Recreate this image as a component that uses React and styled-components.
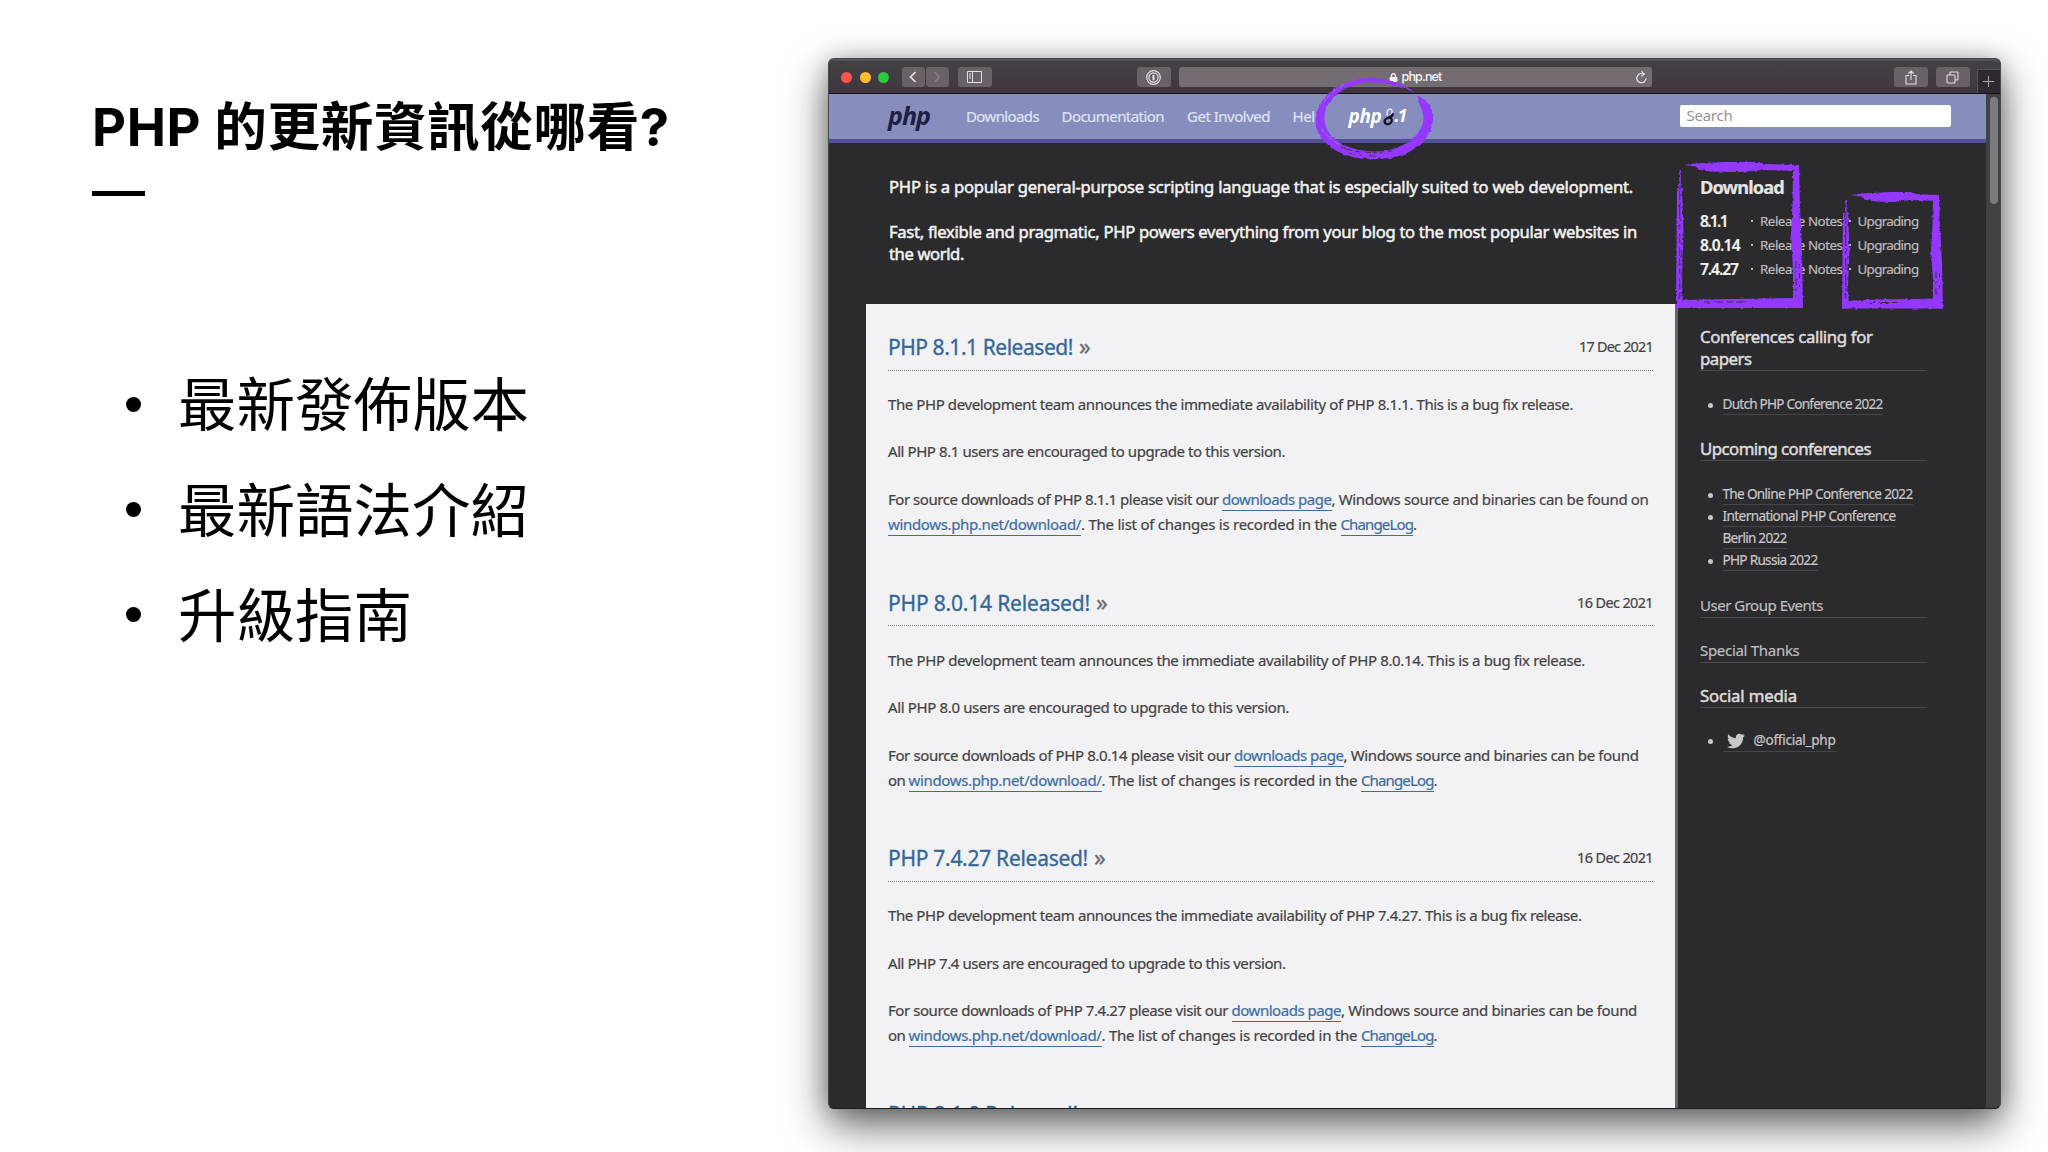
import React, { useLayoutEffect, useRef, useState } from 'react';
import styled, { createGlobalStyle } from 'styled-components';
import { FaLock, FaTwitter } from 'react-icons/fa';

const GlobalStyle = createGlobalStyle`
  * {
    box-sizing: border-box;
  }

  html, body {
    margin: 0;
    padding: 0;
    background: #fff;
    overflow: hidden;
  }

  h1, h2, h3, p, ul {
    margin: 0;
    padding: 0;
    font-weight: normal;
  }

  ul {
    list-style: none;
  }
`;

const sans = `"Noto Sans", "Open Sans", sans-serif`;
const purple = '#9437ff';

/* ---------- text that is tracked to a given width ---------- */

const FitBox = styled.span`
  display: inline-block;
  white-space: pre;
  width: ${(props) => props.$w}px;
`;

function Fit({ w, children }) {
  const ref = useRef(null);
  const [spacing, setSpacing] = useState(0);

  useLayoutEffect(() => {
    const el = ref.current;
    const natural = el.getBoundingClientRect().width;
    setSpacing((w - natural) / el.textContent.length);
  }, [w]);

  return (
    <FitBox $w={w}>
      <span ref={ref} style={{ letterSpacing: spacing }}>{children}</span>
    </FitBox>
  );
}

/* ---------- slide ---------- */

const Slide = styled.main`
  width: 2048px;
  height: 1152px;
  display: flex;
  background: #fff;
  overflow: hidden;
  position: relative;
`;

const Left = styled.section`
  width: 828px;
  flex: none;
  padding: 88px 0 0 92px;
`;

const Title = styled.h1`
  font-family: Inter, "Noto Sans CJK TC", sans-serif;
  font-size: 52.6px;
  line-height: 78px;
  font-weight: 700;
  letter-spacing: 0.6px;
  color: #000;
  white-space: nowrap;
`;

const Dash = styled.div`
  width: 53px;
  height: 5px;
  margin-top: 25px;
  background: #000;
`;

const Bullets = styled.ul`
  margin-top: 155.5px;
  padding-left: 34px;
`;

const Bullet = styled.li`
  display: flex;
  align-items: center;
  height: 105.4px;
  font-family: "Noto Sans CJK TC", sans-serif;
  font-size: 58.5px;
  line-height: 80px;
  color: #000;

  &::before {
    content: "";
    width: 15px;
    height: 15px;
    margin-right: 37px;
    border-radius: 50%;
    background: #000;
  }

  > span {
    padding-bottom: 6px;
  }
`;

/* ---------- browser window ---------- */

const Window = styled.section`
  width: 1173px;
  height: 1051px;
  flex: none;
  margin-top: 58px;
  border: 1px solid #48484b;
  border-bottom-color: #1d1c1f;
  border-radius: 6px;
  background: #2b2a2c;
  box-shadow: 0 16px 42px 0 rgba(0, 0, 0, 0.62), 0 0 22px rgba(0, 0, 0, 0.18);
  display: flex;
  flex-direction: column;
  overflow: hidden;
  font-family: ${sans};
`;

const TitleBar = styled.div`
  height: 35px;
  flex: none;
  display: flex;
  align-items: center;
  padding: 1px 0 1px 12px;
  border-top: 2px solid #555457;
  border-bottom: 1px solid #151317;
  background: linear-gradient(#434145, #40353f);
`;

const Light = styled.span`
  width: 11px;
  height: 11px;
  margin-right: 7.5px;
  border-radius: 50%;
  background: ${(props) => props.$color};
`;

const BarButton = styled.span`
  width: ${(props) => props.$w || 34}px;
  height: 20px;
  margin-left: ${(props) => props.$ml || 0}px;
  border-radius: 3px;
  background: #696168;
  color: ${(props) => (props.$dim ? '#8d858c' : '#e4e0e4')};
  display: flex;
  align-items: center;
  justify-content: center;
`;

const Address = styled.div`
  width: 473px;
  height: 20px;
  margin-left: 8px;
  padding: 0 5px 0 210px;
  border-radius: 3px;
  background: #746c73;
  color: #f6f4f6;
  display: flex;
  align-items: center;
  font: 500 12.5px/20px Inter, sans-serif;

  > :last-child {
    margin-left: auto;
  }
`;

const Url = styled.span`
  margin-left: 4px;
`;

const NewTab = styled.span`
  width: 23px;
  height: 24px;
  margin-left: 7px;
  margin-bottom: -1px;
  align-self: flex-end;
  border: 1px solid #59535a;
  border-width: 1px 0 0 1px;
  background: #2e2930;
  color: #aaa6ab;
  display: flex;
  align-items: center;
  justify-content: center;
`;

const View = styled.div`
  flex: 1;
  min-height: 0;
  display: flex;
`;

const Page = styled.div`
  width: 1157px;
  flex: none;
  display: flex;
  flex-direction: column;
  overflow: hidden;
`;

const ScrollTrack = styled.div`
  flex: 1;
  padding: 3px 0 0 4px;
  background: #414043;
`;

const ScrollThumb = styled.div`
  width: 8px;
  height: 107px;
  border-radius: 4px;
  background: #7a797b;
`;

/* ---------- php.net header ---------- */

const Nav = styled.nav`
  height: 49px;
  flex: none;
  display: flex;
  align-items: center;
  padding: 0 0 1px 59px;
  border-bottom: 4px solid #4f5096;
  background: #878dbd;
`;

const NavLink = styled.span`
  margin-left: ${(props) => props.$ml}px;
  margin-top: -1px;
  font-size: 15px;
  line-height: 24px;
  color: #dfe3f6;
  -webkit-text-stroke: 0.2px;
`;

const Logo = styled.span`
  width: ${(props) => props.$w}px;
  font-size: ${(props) => props.$size}px;
  line-height: 30px;
  margin-top: -${(props) => props.$up}px;
  font-weight: 700;
  font-style: italic;
  color: ${(props) => props.$color};
`;

const Release = styled.span`
  display: flex;
  align-items: center;
  margin-left: 25px;
`;

const Search = styled.span`
  width: 271px;
  height: 22px;
  margin-left: 274px;
  padding-left: 7px;
  border-radius: 2px;
  background: #fff;
  color: #949494;
  font-size: 15px;
  line-height: 21px;
`;

/* ---------- php.net body ---------- */

const Body = styled.div`
  flex: 1;
  min-height: 0;
  display: flex;
`;

const Main = styled.div`
  width: 846px;
  flex: none;
  display: flex;
  flex-direction: column;
`;

const Intro = styled.div`
  height: 160.5px;
  flex: none;
  padding: 33px 0 0 60px;
  font-size: 16.6px;
  line-height: 22px;
  color: #f3f3f3;
  -webkit-text-stroke: 0.5px;

  p + p {
    margin-top: 23px;
  }
`;

const Line = styled.span`
  display: block;
  white-space: nowrap;
`;

const News = styled.div`
  flex: 1;
  min-height: 0;
  margin-left: 37px;
  padding: 0 22px;
  background: #f2f1f3;
  overflow: hidden;
`;

const Article = styled.article`
  height: 255.7px;
  padding-top: 27px;
  font-size: 15px;
  line-height: 25px;
  color: #434244;
  -webkit-text-stroke: 0.2px;
`;

const ArticleHead = styled.header`
  height: 40px;
  display: flex;
  align-items: center;
  justify-content: space-between;
  padding-bottom: 7px;
  border-bottom: 1px dotted #857f84;
  font-size: 14.4px;
`;

const ArticleTitle = styled.h2`
  font-size: 21px;
  line-height: 30px;
  color: #33669a;
  white-space: nowrap;
  -webkit-text-stroke: 0.3px;

  i {
    margin-left: 6px;
    font-size: 23px;
    font-style: normal;
    color: #6b6b70;
  }
`;

const Para = styled.p`
  margin-top: ${(props) => props.$mt}px;
`;

const Link = styled.a`
  color: #3a6ea5;

  ${FitBox} {
    line-height: 21px;
    border-bottom: 1px solid #3a6ea5;
  }
`;

/* ---------- php.net sidebar ---------- */

const Aside = styled.aside`
  flex: 1;
  padding-top: 32px;
  padding-left: 22px;
  color: #c8c7c9;
  -webkit-text-stroke: 0.2px;
`;

const Divider = styled.div`
  width: 3px;
  flex: none;
  margin-top: 161px;
  background: #646468;
`;

const DownloadTitle = styled.h3`
  font-size: 18.2px;
  line-height: 24px;
  height: 34px;
  font-weight: 700;
  color: #e4e3e5;
`;

const Row = styled.div`
  display: flex;
  align-items: center;
  height: 24px;
  font-size: 13.4px;
  line-height: 24px;
  color: #bdbcbe;
`;

const Version = styled.b`
  width: 51px;
  font-size: 15.6px;
  font-weight: 600;
  color: #f2f2f2;
`;

const Dot = styled.i`
  width: 2px;
  height: 2px;
  margin: 0 7px 0 ${(props) => props.$ml || 0}px;
  background: #bdbcbe;
`;

const SideTitle = styled.h3`
  width: 227px;
  margin-top: ${(props) => props.$mt}px;
  padding-bottom: ${(props) => props.$pb || 0}px;
  border-bottom: 1px solid #4a494c;
  font-size: ${(props) => (props.$small ? 15 : 16.8)}px;
  line-height: 22px;
  color: ${(props) => (props.$small ? '#bfbec0' : '#dddcde')};
  -webkit-text-stroke: ${(props) => (props.$small ? 0.2 : 0.5)}px;
`;

const SideList = styled.ul`
  margin-top: ${(props) => props.$mt}px;
`;

const SideItem = styled.li`
  display: flex;
  align-items: flex-start;
  padding-left: 8px;
  font-size: 13.6px;
  line-height: 20px;

  &::before {
    content: "";
    width: 5px;
    height: 5px;
    margin: 9px 9.5px 0 0;
    border-radius: 50%;
    background: #c8c7c9;
  }

  ${FitBox} {
    display: block;
    height: 22.2px;
    background: linear-gradient(#454447, #454447) 0 20px / 100% 1px no-repeat;
  }
`;

const Handle = styled.span`
  display: flex;
  height: 22px;
  border-bottom: 1px solid #454447;

  > svg {
    margin: 2px 9px 0 4px;
    flex: none;
  }

  ${FitBox} {
    background: none;
  }
`;

/* ---------- hand-drawn marks over the window ---------- */

const Mark = styled.svg`
  position: absolute;
  left: ${(props) => props.$x}px;
  top: ${(props) => props.$y}px;
  overflow: visible;
`;

function RoughFilter() {
  return (
    <filter id="rough" x="-10%" y="-10%" width="120%" height="120%">
      <feTurbulence type="fractalNoise" baseFrequency="0.22 0.3" numOctaves="2" seed="4" result="n" />
      <feDisplacementMap in="SourceGraphic" in2="n" scale="3" xChannelSelector="R" yChannelSelector="G" />
    </filter>
  );
}

function BrushBox({ x, y, w, h }) {
  return (
    <Mark $x={x} $y={y} width={w} height={h} fill={purple}>
      <g filter="url(#rough)">
        <path d={`M8 3 L20 1.5 L48 0 L${w * 0.66} 0 L${w * 0.7} 2 L${w - 4} 3 L${w - 4} 9 L${w * 0.68} 8 L${w * 0.5} 10 L34 9.5 L22 7.5 L20 4.5 Z`} />
        <path d={`M${w - 10} 4 L${w - 4} 4 L${w - 3} ${h * 0.3} L${w - 1} ${h * 0.6} L${w} ${h} L${w - 10} ${h} L${w - 10} ${h * 0.75} L${w - 12} ${h * 0.5} L${w - 10.5} ${h * 0.3} Z`} />
        <path d={`M0 ${h} L1 ${h - 6} L10 ${h - 8} L${w * 0.4} ${h - 9} L${w - 2} ${h - 10} L${w} ${h} Z`} />
        <path d={`M0 ${h} L1 ${h * 0.18} L6 ${h * 0.18} L7.5 ${h * 0.5} L6 ${h * 0.8} L7 ${h} Z`} />
        <path d={`M3.5 8 L5 8 L4.5 ${h * 0.2} L3 ${h * 0.2} Z`} />
      </g>
      <g fill="none" stroke="#2b2a2c" strokeWidth="0.9" filter="url(#rough)">
        <path d={`M3.8 ${h * 0.18} L3.8 ${h - 9}`} strokeDasharray="11 3 19 2 6 4" />
        <path d={`M6 ${h * 0.55} V${h - 12}`} strokeDasharray="3 5 7 6" />
        <path d={`M${w - 7} ${h * 0.68} V${h - 11}`} strokeDasharray="7 3 3 4" />
        <path d={`M${w - 3.5} ${h * 0.7} V${h - 14}`} strokeDasharray="4 6" />
        <path d={`M28 ${h - 6} H${w * 0.55}`} strokeDasharray="6 3 10 4" />
      </g>
    </Mark>
  );
}

function BrushCircle() {
  return (
    <Mark $x={1315} $y={77} width="119" height="83" fill={purple}>
      <g filter="url(#rough)">
        <path
          fillRule="evenodd"
          d="M100 16 C90 7 74 2 57 1 C40 1 22 7 12 18 C3 27 -1 40 1 50 C4 63 18 74 34 79
             C52 84 74 83 90 77 C106 70 116 58 118 44 C119 32 113 23 103 19 L104 27
             C109 35 110 44 106 51 C99 64 84 72 68 74 C49 76 30 71 20 62 C11 55 8 45 10 35
             C13 23 24 12 40 8 C58 3 80 6 96 14 Z"
        />
      </g>
      <g fill="none" stroke="#878dbd" strokeWidth="1" filter="url(#rough)">
        <path d="M9 25 C13 18 21 11 29 8" strokeDasharray="9 4 5 3" />
        <path d="M6 50 C11 59 18 64 25 68" strokeDasharray="5 3 9 3" />
      </g>
      <g fill="none" stroke="#37333e" strokeWidth="0.9" filter="url(#rough)">
        <path d="M26 70 C42 77 60 76 78 74" strokeDasharray="12 3 5 4" />
        <path d="M34 76 C46 79 54 79 62 79" strokeDasharray="6 4" />
      </g>
    </Mark>
  );
}

/* ---------- data ---------- */

const bullets = ['最新發佈版本', '最新語法介紹', '升級指南'];

const news = [
  { v: '8.1.1', minor: '8.1', date: '17 Dec 2021', titleW: 185, dateW: 74, p1: 685, p2: 397, a: 334, b: 317, wrap: false },
  { v: '8.0.14', minor: '8.0', date: '16 Dec 2021', titleW: 202, dateW: 76, p1: 697, p2: 401, a: 346, b: 295, wrap: true },
  { v: '7.4.27', minor: '7.4', date: '16 Dec 2021', titleW: 200, dateW: 76, p1: 693.5, p2: 397.5, a: 343.5, b: 296, wrap: true },
];

const versions = [
  { v: '8.1.1', w: 27 },
  { v: '8.0.14', w: 40 },
  { v: '7.4.27', w: 38 },
];

function NewsItem({ item }) {
  return (
    <Article>
      <ArticleHead>
        <ArticleTitle>
          <Fit w={item.titleW}>{`PHP ${item.v} Released!`}</Fit>
          <i>»</i>
        </ArticleTitle>
        <Fit w={item.dateW}>{item.date}</Fit>
      </ArticleHead>
      <Para $mt={21.6}>
        <Fit w={item.p1}>{`The PHP development team announces the immediate availability of PHP ${item.v}. This is a bug fix release.`}</Fit>
      </Para>
      <Para $mt={22.2}>
        <Fit w={item.p2}>{`All PHP ${item.minor} users are encouraged to upgrade to this version.`}</Fit>
      </Para>
      <Para $mt={22.6}>
        <Line>
          <Fit w={item.a}>{`For source downloads of PHP ${item.v} please visit our `}</Fit>
          <Link><Fit w={109.5}>downloads page</Fit></Link>
          <Fit w={item.b}>{`, Windows source and binaries can be found${item.wrap ? '' : ' on'}`}</Fit>
        </Line>
        <Line>
          {item.wrap && <Fit w={20.5}>{'on '}</Fit>}
          <Link><Fit w={193}>windows.php.net/download/</Fit></Link>
          <Fit w={259.5}>{'. The list of changes is recorded in the '}</Fit>
          <Link><Fit w={72.5}>ChangeLog</Fit></Link>.
        </Line>
      </Para>
    </Article>
  );
}

function Toolbar() {
  return (
    <TitleBar>
      <Light $color="#fc5650" />
      <Light $color="#fdbd2e" />
      <Light $color="#2bc840" />
      <BarButton $w={23} $ml={5}>
        <svg width="8" height="12" viewBox="0 0 8 12" fill="none" stroke="currentColor" strokeWidth="1.7">
          <path d="M6.5 1 L1.5 6 L6.5 11" />
        </svg>
      </BarButton>
      <BarButton $w={23} $ml={1} $dim>
        <svg width="8" height="12" viewBox="0 0 8 12" fill="none" stroke="currentColor" strokeWidth="1.3">
          <path d="M1.5 1 L6.5 6 L1.5 11" />
        </svg>
      </BarButton>
      <BarButton $ml={9}>
        <svg width="15" height="12" viewBox="0 0 15 12" fill="none" stroke="currentColor">
          <path d="M.5 .5 H14.5 V11.5 H.5 Z M5.5 .5 V11.5 M2 3 H4 M2 5 H4 M2 7 H4" />
        </svg>
      </BarButton>
      <BarButton $ml={145}>
        <svg width="15" height="15" viewBox="0 0 15 15" fill="none" stroke="currentColor">
          <circle cx="7.5" cy="7.5" r="6.8" strokeWidth="1.2" />
          <circle cx="7.5" cy="7.5" r="4.6" strokeWidth="1.2" />
          <path d="M7.5 4.8 V10.2" strokeWidth="2" />
        </svg>
      </BarButton>
      <Address>
        <FaLock size={9} />
        <Url><Fit w={40}>php.net</Fit></Url>
        <svg width="11" height="13" viewBox="0 0 11 13" fill="none" stroke="currentColor" strokeWidth="1.1">
          <path d="M6.8 2.8 A4.6 4.6 0 1 0 10 7.2" />
          <path d="M5.4 .4 L8.2 3 L5.4 5.4" />
        </svg>
      </Address>
      <BarButton $ml={242}>
        <svg width="12" height="15" viewBox="0 0 12 15" fill="none" stroke="currentColor" strokeWidth="1.1">
          <path d="M4 5.5 H1 V14 H11 V5.5 H8 M6 10 V1 M3.2 3.6 L6 .9 L8.8 3.6" />
        </svg>
      </BarButton>
      <BarButton $ml={8}>
        <svg width="13" height="13" viewBox="0 0 13 13" fill="none" stroke="currentColor" strokeWidth="1.1">
          <rect x="1" y="4" width="8" height="8" rx="1" />
          <path d="M4 4 V1.8 Q4 1 4.8 1 H11.2 Q12 1 12 1.8 V8.2 Q12 9 11.2 9 H9" />
        </svg>
      </BarButton>
      <NewTab>
        <svg width="11" height="11" viewBox="0 0 11 11" stroke="currentColor">
          <path d="M5.5 0 V11 M0 5.5 H11" />
        </svg>
      </NewTab>
    </TitleBar>
  );
}

function Sidebar() {
  return (
    <Aside>
      <DownloadTitle><Fit w={84}>Download</Fit></DownloadTitle>
      {versions.map((item) => (
        <Row key={item.v}>
          <Version><Fit w={item.w}>{item.v}</Fit></Version>
          <Dot />
          <Fit w={82.5}>Release Notes</Fit>
          <Dot $ml={6} />
          <Fit w={61}>Upgrading</Fit>
        </Row>
      ))}

      <SideTitle $mt={45}>
        <Line><Fit w={172.5}>Conferences calling for</Fit></Line>
        <Line><Fit w={51.5}>papers</Fit></Line>
      </SideTitle>
      <SideList $mt={22.5}>
        <SideItem><Fit w={160}>Dutch PHP Conference 2022</Fit></SideItem>
      </SideList>

      <SideTitle $mt={22}><Fit w={171}>Upcoming conferences</Fit></SideTitle>
      <SideList $mt={23}>
        <SideItem><Fit w={190}>The Online PHP Conference 2022</Fit></SideItem>
        <SideItem>
          <span>
            <Fit w={173}>International PHP Conference</Fit>
            <Fit w={64}>Berlin 2022</Fit>
          </span>
        </SideItem>
        <SideItem><Fit w={95}>PHP Russia 2022</Fit></SideItem>
      </SideList>

      <SideTitle $small $mt={21.6} $pb={1}><Fit w={123}>User Group Events</Fit></SideTitle>
      <SideTitle $small $mt={21.4} $pb={1}><Fit w={99.5}>Special Thanks</Fit></SideTitle>
      <SideTitle $mt={22}><Fit w={97}>Social media</Fit></SideTitle>
      <SideList $mt={22}>
        <SideItem>
          <Handle>
            <FaTwitter size={18} />
            <Fit w={82}>@official_php</Fit>
          </Handle>
        </SideItem>
      </SideList>
    </Aside>
  );
}

function Browser() {
  return (
    <Window>
      <Toolbar />
      <View>
        <Page>
          <Nav>
            <Logo $w={42} $size={25} $up={3} $color="#1c2143"><Fit w={42}>php</Fit></Logo>
            <NavLink $ml={36}><Fit w={73}>Downloads</Fit></NavLink>
            <NavLink $ml={22.5}><Fit w={102.5}>Documentation</Fit></NavLink>
            <NavLink $ml={23}><Fit w={83}>Get Involved</Fit></NavLink>
            <NavLink $ml={22.5}><Fit w={31}>Help</Fit></NavLink>
            <Release>
              <Logo $w={33} $size={19} $up={0} $color="#fff"><Fit w={33}>php</Fit></Logo>
              <svg width="13" height="19" viewBox="0 0 13 19" fill="none" strokeLinecap="round">
                <path d="M5.5 8.5 C4 5 6 2 8.5 2 C11 3 10.5 6 8.5 8" stroke="#dcdff2" strokeWidth="1.5" />
                <path d="M10.5 8.5 C8 10.5 3 11 2.5 14 C2.5 17.5 6.5 18 8.5 16 C11 14 9.5 11 8 10.5" stroke="#14151c" strokeWidth="2.2" />
                <path d="M11 7 L7.5 11" stroke="#14151c" strokeWidth="2" />
              </svg>
              <Logo $w={11} $size={17} $up={0} $color="#fff"><Fit w={11}>.1</Fit></Logo>
            </Release>
            <Search><Fit w={46}>Search</Fit></Search>
          </Nav>
          <Body>
            <Main>
              <Intro>
                <p>
                  <Line><Fit w={744}>PHP is a popular general-purpose scripting language that is especially suited to web development.</Fit></Line>
                </p>
                <p>
                  <Line><Fit w={748}>Fast, flexible and pragmatic, PHP powers everything from your blog to the most popular websites in</Fit></Line>
                  <Line><Fit w={75}>the world.</Fit></Line>
                </p>
              </Intro>
              <News>
                {news.map((item) => (
                  <NewsItem key={item.v} item={item} />
                ))}
                <Article>
                  <ArticleHead>
                    <ArticleTitle><Fit w={190}>PHP 8.1.0 Released!</Fit></ArticleTitle>
                  </ArticleHead>
                </Article>
              </News>
            </Main>
            <Divider />
            <Sidebar />
          </Body>
        </Page>
        <ScrollTrack>
          <ScrollThumb />
        </ScrollTrack>
      </View>
    </Window>
  );
}

function App() {
  return (
    <Slide>
      <GlobalStyle />
      <Left>
        <Title>PHP 的更新資訊從哪看?</Title>
        <Dash />
        <Bullets>
          {bullets.map((text) => (
            <Bullet key={text}><span>{text}</span></Bullet>
          ))}
        </Bullets>
      </Left>
      <Browser />
      <svg width="0" height="0">
        <defs>
          <RoughFilter />
        </defs>
      </svg>
      <BrushCircle />
      <BrushBox x={1676} y={162} w={127} h={146} />
      <BrushBox x={1841.5} y={191.5} w={101} h={116.5} />
    </Slide>
  );
}

export default App;
